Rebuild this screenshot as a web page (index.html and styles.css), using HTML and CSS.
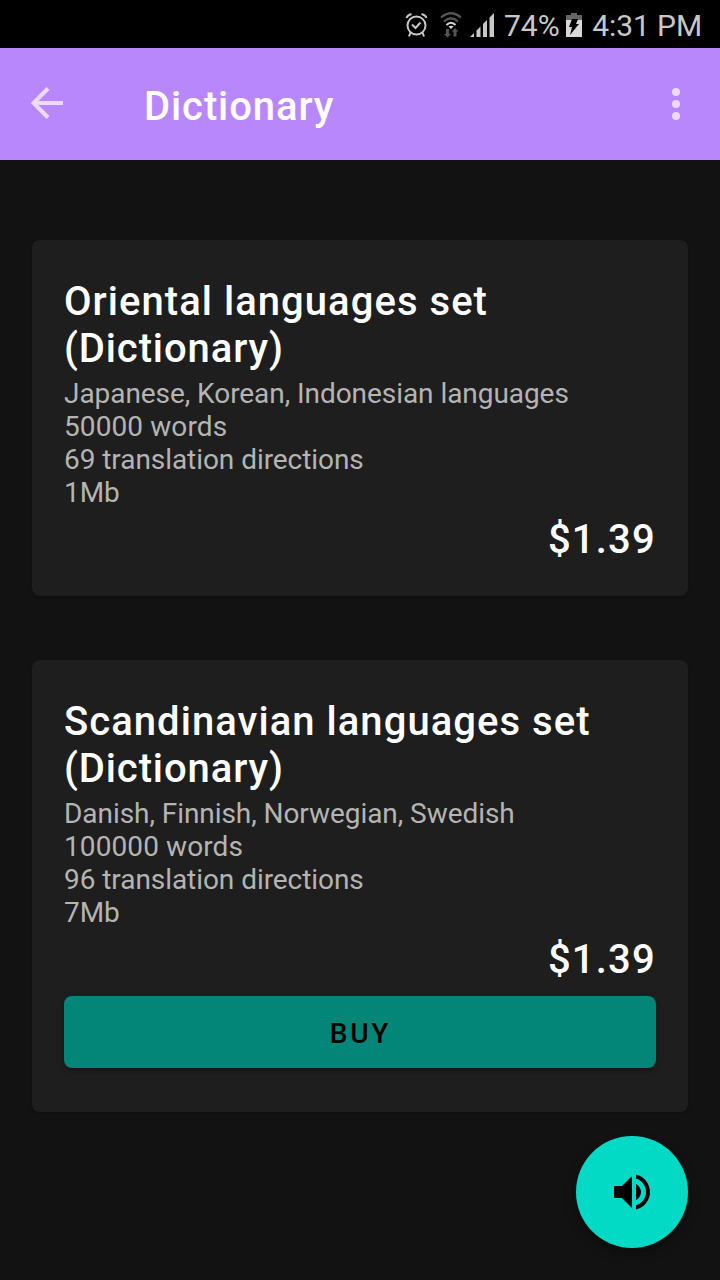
FILE: index.html
```html
<!DOCTYPE html>
<html lang="en">
<head>
<meta charset="utf-8">
<title>Dictionary</title>
<link rel="stylesheet" href="styles.css">
</head>
<body>
<div class="screen">
  <div class="status">
    <svg class="alarm" width="24" height="26" viewBox="0 0 24 26" fill="none" stroke="#c8c8c8" stroke-width="2"><circle cx="11.500" cy="13.500" r="9"/><path d="M1.500 6Q2.500 3 6.500 2M21.500 6Q20.500 3 16.500 2M5.500 20.500 4 24.500M17.500 20.500l1.500 4M7 12.500l3.500 3.500 5-5.500"/></svg>
    <svg class="wifi" width="22" height="26" viewBox="0 0 22 26" fill="none"><path d="M1 5.500Q11-3 21 5.500M4 9.500Q11 3 18 9.500" stroke="#555" stroke-width="2.200"/><path d="M6.500 13Q11 8.500 15.500 13" stroke="#d8d8d8" stroke-width="2"/><path d="M8.500 14.500Q11 13 13.500 14.500L11 17Z" fill="#d8d8d8"/><path d="M6 17h3v5h2l-3.500 3.500L4 22h2zM13.500 24.500h3v-5h2L15 16l-3.500 3.500h2z" fill="#555"/></svg>
    <svg class="signal" width="24" height="24" viewBox="0 0 24 24" fill="#c8c8c8"><path d="M0 24L4 20V24zM6.500 17.500L10.500 13.500V24H6.500zM13 11L17 7V24H13zM19.500 4.500L24 0V24H19.500z"/></svg>
    <span class="percent">74%</span>
    <svg class="battery" width="16" height="24" viewBox="0 0 16 24"><path fill="#666" d="M5 0h6v2h5v5H0V2h5z"/><path fill="#d8d8d8" d="M0 7h16v17H0z"/><path d="M6 6h6l-2 5h3L4 22l2-8H3z"/></svg>
    <span class="clock">4:31 PM</span>
  </div>
  <header class="appbar">
    <svg class="back" width="32" height="32" viewBox="0 0 32 32" fill="none" stroke="#ebdbff" stroke-width="4"><path d="M32 16H3M17 1.500 2.500 16 17 30.500"/></svg>
    <h1 class="title">Dictionary</h1>
    <svg class="more" width="8" height="32" viewBox="0 0 8 32" fill="#ebdbff"><circle cx="4" cy="4" r="4"/><circle cx="4" cy="16" r="4"/><circle cx="4" cy="28" r="4"/></svg>
  </header>
  <main class="list">
    <section class="card">
      <h2 class="name">Oriental languages set<br><span class="kind">(Dictionary)</span></h2>
      <p class="info">Japanese, Korean, Indonesian languages<br><span class="count">50000 words</span><br>69 translation directions<br>1Mb</p>
      <div class="price">$1.39</div>
    </section>
    <section class="card">
      <h2 class="name">Scandinavian languages set<br><span class="kind">(Dictionary)</span></h2>
      <p class="info">Danish, Finnish, Norwegian, Swedish<br><span class="count">100000 words</span><br>96 translation directions<br>7Mb</p>
      <div class="price">$1.39</div>
      <button class="buy">BUY</button>
    </section>
  </main>
  <button class="fab" aria-label="Speak"><svg width="48" height="48" viewBox="0 0 24 24"><path d="M3 9v6h4l5 5V4L7 9H3zm13.500 3c0-1.770-1.020-3.290-2.500-4.030v8.050c1.480-.73 2.500-2.250 2.500-4.020zM14 3.230v2.060c2.890.86 5 3.540 5 6.710s-2.110 5.850-5 6.710v2.060c4.010-.91 7-4.490 7-8.770s-2.990-7.860-7-8.770z"/></svg></button>
</div>
</body>
</html>
```
FILE: styles.css
```css
* { box-sizing: border-box; }
body { margin: 0; background: #121212; font-family: Roboto, sans-serif; }
.screen { position: relative; width: 720px; height: 1280px; overflow: hidden; background: #121212; }
.status { display: flex; align-items: center; height: 48px; padding: 2px 18px 0 405px; background: #000; color: #c8c8c8; font-size: 30px; white-space: nowrap; }
.status svg { flex: none; }
.wifi { margin-left: 11px; }
.signal { margin-left: 8px; }
.percent { margin-left: 10px; }
.battery { margin-left: 6px; }
.clock { margin-left: auto; letter-spacing: -0.1px; }
.appbar { display: flex; align-items: center; height: 112px; padding: 0 40px 0 31px; background: #b987fc; }
.back { margin-top: -2px; }
.title { margin: 4px 0 0 81px; color: #fff; font-size: 40px; font-weight: 500; letter-spacing: 0.9px; }
.more { margin-left: auto; }
.list { display: flex; flex-direction: column; gap: 64px; padding: 80px 32px 0; }
.card { padding: 38px 32px 32px; border-radius: 8px; background: #1e1e1e; box-shadow: 0 1px 3px rgba(0,0,0,.2); }
.card:first-child { height: 356px; }
.card:last-child { height: 452px; }
.name { margin: 0; color: #fff; font-size: 40px; line-height: 47px; font-weight: 500; letter-spacing: 1.04px; }
.kind { letter-spacing: 0.9px; }
.info { margin: 5px 0 0; color: #b4b4b4; font-size: 28px; line-height: 33px; letter-spacing: -0.06px; }
.count { letter-spacing: 0.1px; }
.price { margin-top: 7px; color: #fff; font-size: 40px; line-height: 47px; font-weight: 500; letter-spacing: 1.2px; text-align: right; }
.buy { display: block; width: 100%; height: 72px; margin-top: 13px; padding: 2px 0 0 1px; border: 0; border-radius: 8px; background: #038677; color: #000; font: 500 28px Roboto, sans-serif; letter-spacing: 2.8px; box-shadow: 0 3px 5px rgba(0,0,0,.3); }
.fab { position: absolute; right: 32px; bottom: 32px; display: flex; align-items: center; justify-content: center; width: 112px; height: 112px; padding: 0; border: 0; border-radius: 50%; background: #03dac5; box-shadow: 0 6px 12px rgba(0,0,0,.3); }
```
